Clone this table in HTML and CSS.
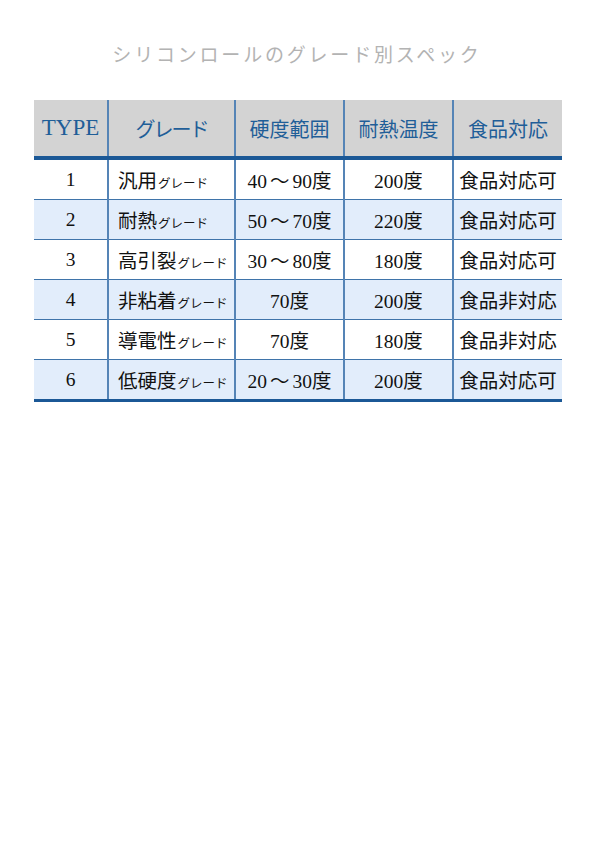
FILE: index.html
```
<!DOCTYPE html>
<html lang="ja">
<head>
<meta charset="utf-8">
<title>シリコンロールのグレード別スペック</title>
<link rel="stylesheet" href="styles.css">
</head>
<body>
<div class="page">
  <h1 class="title">シリコンロールのグレード別スペック</h1>
  <table class="spec">
    <colgroup>
      <col class="c1"><col class="c2"><col class="c3"><col class="c4"><col class="c5">
    </colgroup>
    <thead>
      <tr>
        <th class="type">TYPE</th>
        <th class="kana">グレード</th>
        <th>硬度範囲</th>
        <th>耐熱温度</th>
        <th>食品対応</th>
      </tr>
    </thead>
    <tbody>
      <tr><td>1</td><td class="grade">汎用<small>グレード</small></td><td>40<span class="tilde">～</span>90度</td><td>200度</td><td>食品対応可</td></tr>
      <tr class="alt"><td>2</td><td class="grade">耐熱<small>グレード</small></td><td>50<span class="tilde">～</span>70度</td><td>220度</td><td>食品対応可</td></tr>
      <tr><td>3</td><td class="grade">高引裂<small>グレード</small></td><td>30<span class="tilde">～</span>80度</td><td>180度</td><td>食品対応可</td></tr>
      <tr class="alt"><td>4</td><td class="grade">非粘着<small>グレード</small></td><td>70度</td><td>200度</td><td>食品非対応</td></tr>
      <tr><td>5</td><td class="grade">導電性<small>グレード</small></td><td>70度</td><td>180度</td><td>食品非対応</td></tr>
      <tr class="alt"><td>6</td><td class="grade">低硬度<small>グレード</small></td><td>20<span class="tilde">～</span>30度</td><td>200度</td><td>食品対応可</td></tr>
    </tbody>
  </table>
</div>
</body>
</html>
```
FILE: styles.css
```
html, body {
  margin: 0;
  padding: 0;
  background: #ffffff;
}

.page {
  width: 594px;
  padding-top: 40px;
}

.title {
  margin: 0 0 32px 0;
  height: 28px;
  line-height: 28px;
  text-align: center;
  font-family: "Noto Sans CJK JP", "Noto Sans", sans-serif;
  font-weight: 400;
  font-size: 19px;
  letter-spacing: 2.8px;
  color: #b3b3b3;
}

.spec {
  margin-left: 34px;
  width: 528px;
  border-collapse: collapse;
  table-layout: fixed;
  font-family: "Liberation Serif", "Noto Sans CJK JP", serif;
  color: #111111;
}

.c1 { width: 74px; }
.c2 { width: 127px; }
.c3 { width: 109px; }
.c4 { width: 109px; }
.c5 { width: 109px; }

.spec th {
  height: 56px;
  padding: 0;
  background: #d3d3d3;
  color: #1f5e98;
  font-weight: 400;
  font-size: 20px;
  text-align: center;
  border-left: 2px solid #5584b6;
  border-bottom: 4px solid #1b5896;
}

.spec th.type {
  font-size: 23px;
}

.spec th.kana {
  letter-spacing: -2px;
}

.spec td {
  height: 39px;
  padding: 0;
  font-size: 19.5px;
  text-align: center;
  border-left: 2px solid #5584b6;
  border-bottom: 1.5px solid #3f74aa;
}

.spec th:first-child,
.spec td:first-child {
  border-left: none;
}

.spec tbody tr:last-child td {
  border-bottom: 3px solid #1b5896;
}

.spec tr.alt td {
  background: #e2edfb;
}

.spec td.grade {
  text-align: left;
  padding-left: 9px;
  white-space: nowrap;
}

.spec td.grade small {
  font-size: 12.5px;
  margin-left: 1px;
}

.tilde {
  margin: 0 3px;
}
```
